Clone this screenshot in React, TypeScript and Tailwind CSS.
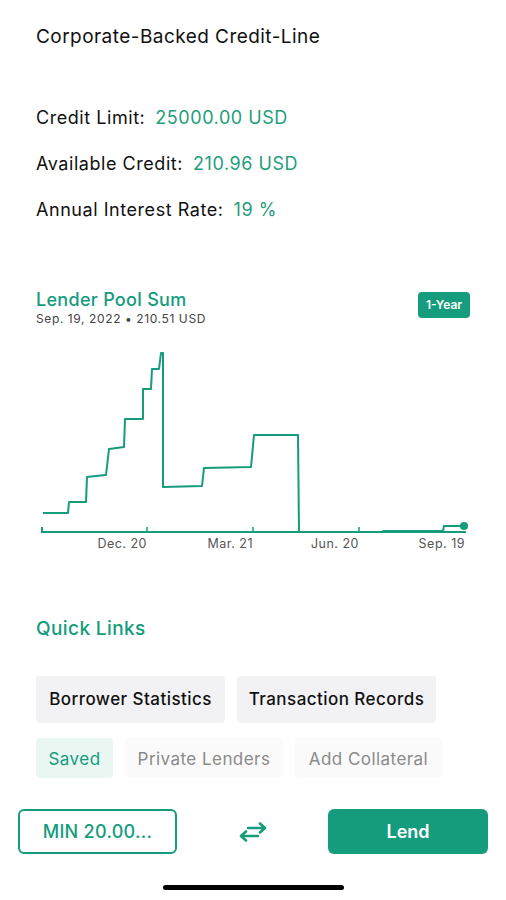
import React from "react";

const GREEN = "#149c7c";

const points: [number, number][] = [
  [43, 512], [68, 512], [69, 501], [86, 501], [87, 476], [105, 474], [106, 474],
  [109, 448], [124, 446], [125, 418], [143, 418], [143, 388], [151, 388],
  [152, 368], [159, 368], [161, 352], [163, 352], [163, 486], [202, 485],
  [204, 467], [251, 466], [254, 434], [298, 434], [299, 531], [383, 531],
  [383, 530], [443, 530], [444, 525], [464, 525],
];

function PoolChart() {
  // chart origin sits at page (36, 340)
  const d = points
    .map(([x, y], i) => `${i === 0 ? "M" : "L"}${x - 36} ${y - 340}`)
    .join(" ");
  const ticks = [147, 253, 359];
  const labels = [
    { x: 147, t: "Dec. 20" },
    { x: 253, t: "Mar. 21" },
    { x: 359, t: "Jun. 20" },
    { x: 465, t: "Sep. 19" },
  ];
  return (
    <svg width={436} height={214} viewBox="0 0 436 214" className="block">
      <line x1={6} y1={191} x2={430} y2={191} stroke={GREEN} strokeWidth={2} />
      <line x1={6} y1={186} x2={6} y2={192} stroke={GREEN} strokeWidth={2} />
      {ticks.map((t) => (
        <line key={t} x1={t - 36} y1={186} x2={t - 36} y2={192} stroke={GREEN} strokeWidth={1.5} />
      ))}
      <path d={d} fill="none" stroke={GREEN} strokeWidth={2} strokeLinejoin="round" />
      <circle cx={428} cy={185} r={4} fill={GREEN} />
      {labels.map((l) => (
        <text
          key={l.t}
          x={l.x - 36}
          y={207}
          textAnchor="end"
          fontSize={12.5}
          letterSpacing={0.5}
          fill="#555"
          style={{ fontFamily: "Inter, sans-serif" }}
        >
          {l.t}
        </text>
      ))}
    </svg>
  );
}

function SwapIcon() {
  return (
    <svg width={30} height={22} viewBox="0 0 30 22" fill="none" stroke={GREEN} strokeWidth={2.6} strokeLinecap="round" strokeLinejoin="round">
      <path d="M10 7 H27 M22 2.5 L27 7 L22 11.5" />
      <path d="M20 15 H3 M8 10.5 L3 15 L8 19.5" />
    </svg>
  );
}

export default function App() {
  return (
    <div
      className="w-[506px] h-[900px] bg-white flex flex-col text-[#111]"
      style={{ fontFamily: "Inter, 'Noto Sans', sans-serif" }}
    >
      <div className="px-9 pt-[25px]">
        <h1 className="text-[19px] leading-6 font-normal tracking-[0.45px]">Corporate-Backed Credit-Line</h1>

        <div className="mt-[57px] flex flex-col gap-[22px] text-[18px] leading-6 tracking-[0.55px]">
          <p>
            Credit Limit:<span className="ml-2.5 text-[#1f9e7a]">25000.00 USD</span>
          </p>
          <p>
            Available Credit:<span className="ml-2.5 text-[#1f9e7a]">210.96 USD</span>
          </p>
          <p>
            Annual Interest Rate:<span className="ml-2.5 text-[#1f9e7a]">19 %</span>
          </p>
        </div>

        {/* Lender pool chart */}
        <div className="mt-[67px] flex items-start justify-between">
          <div>
            <h2 className="text-[18px] leading-[22px] font-medium tracking-[0.3px] text-[#149c7c]">Lender Pool Sum</h2>
            <p className="text-[12px] leading-[14px] mt-px tracking-[0.6px] text-[#444]">Sep. 19, 2022 • 210.51 USD</p>
          </div>
          <span className="mt-[3px] h-[26px] w-[52px] rounded bg-[#149c7c] text-white text-[12px] font-semibold flex items-center justify-center">
            1-Year
          </span>
        </div>
      </div>

      <div className="pl-9 mt-[15px]">
        <PoolChart />
      </div>

      <div className="px-9 mt-[63px]">
        <h2 className="text-[19px] leading-[22px] font-medium tracking-[0.4px] text-[#149c7c]">Quick Links</h2>

        <div className="mt-[36px] flex gap-3 text-[17px] tracking-[0.45px]">
          <button className="h-[47px] w-[189px] rounded bg-[#f2f2f4] font-medium text-[#111]">
            Borrower Statistics
          </button>
          <button className="h-[47px] w-[199px] rounded bg-[#f2f2f4] font-medium text-[#111]">
            Transaction Records
          </button>
        </div>

        <div className="mt-[15px] flex gap-3 text-[17px] tracking-[0.45px]">
          <button className="h-10 w-[77px] pt-1 rounded bg-[#eaf6f2] text-[#149c7c]">Saved</button>
          <button className="h-10 w-[158px] pt-1 rounded bg-[#fafafa] text-[#8a8a8a]">Private Lenders</button>
          <button className="h-10 w-[147px] pt-1 rounded bg-[#fafafa] text-[#8a8a8a]">Add Collateral</button>
        </div>
      </div>

      <div className="px-[18px] mt-[31px] flex items-center justify-between">
        <button className="h-[45px] w-[159px] rounded-md border-2 border-[#149c7c] text-[18px] font-medium tracking-[0.3px] text-[#149c7c]">
          MIN 20.00...
        </button>
        <SwapIcon />
        <button className="h-[45px] w-[160px] rounded-md bg-[#149c7c] text-[18px] font-semibold text-white">
          Lend
        </button>
      </div>

      <div className="mt-auto mb-[10px] flex justify-center">
        <div className="h-[5px] w-[181px] rounded-full bg-black" />
      </div>
    </div>
  );
}
